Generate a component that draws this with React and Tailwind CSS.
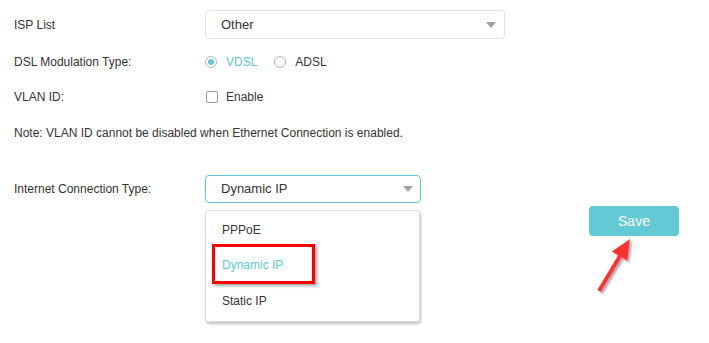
import React from 'react';

const Caret = () => (
  <svg width="10" height="6" viewBox="0 0 10 6" className="shrink-0">
    <path d="M0 0h10L5 6z" fill="#a0a0a0" />
  </svg>
);

const Radio = ({ checked, label }) => (
  <label className="flex items-center gap-[9px]">
    <span className="w-[12px] h-[12px] rounded-full border border-[#b5b5b5] flex items-center justify-center">
      {checked && <span className="w-[6px] h-[6px] rounded-full bg-[#5ec8d5]" />}
    </span>
    <span className={checked ? 'text-[#5ec8d5]' : 'text-[#333]'}>{label}</span>
  </label>
);

const App = () => {
  const options = ['PPPoE', 'Dynamic IP', 'Static IP'];

  return (
    <div
      className="relative w-[709px] h-[343px] bg-white text-[12px] text-[#333] overflow-hidden"
      style={{ fontFamily: '"Liberation Sans", Arial, sans-serif' }}
    >
      <div className="flex flex-col pl-[14px] pt-[10px]">
        <div className="flex items-center h-[29px]">
          <div className="w-[191px]">ISP List</div>
          <div className="w-[300px] h-[29px] border border-[#e3e3e3] rounded-[4px] flex items-center justify-between pl-[15px] pr-[8px] text-[13px]">
            <span>Other</span>
            <Caret />
          </div>
        </div>

        <div className="flex items-center h-[24px] mt-[11px]">
          <div className="w-[191px]">DSL Modulation Type:</div>
          <div className="flex items-center gap-[17px]">
            <Radio checked label="VDSL" />
            <Radio label="ADSL" />
          </div>
        </div>

        <div className="flex items-center h-[24px] mt-[11px]">
          <div className="w-[192px]">VLAN ID:</div>
          <label className="flex items-center gap-[8px]">
            <span className="w-[12px] h-[12px] border border-[#9a9a9a] rounded-[2px]" />
            <span>Enable</span>
          </label>
        </div>

        <div className="flex items-center h-[20px] mt-[14px]">
          Note: VLAN ID cannot be disabled when Ethernet Connection is enabled.
        </div>

        <div className="flex items-center h-[28px] mt-[32px]">
          <div className="w-[191px]">Internet Connection Type:</div>
          <div className="relative">
            <div className="w-[216px] h-[28px] border border-[#5ec8d5] rounded-[4px] flex items-center justify-between pl-[15px] pr-[7px] text-[13px]">
              <span>Dynamic IP</span>
              <Caret />
            </div>
            <div className="absolute left-0 top-[35px] w-[215px] bg-white border border-[#dcdcdc] rounded-[3px] shadow-[1px_2px_3px_rgba(0,0,0,0.25)] pt-[1px] pb-[2px] z-10">
              {options.map((o) => (
                <div
                  key={o}
                  className={`h-[35.5px] flex items-center pl-[16px] ${o === 'Dynamic IP' ? 'text-[#5ec8d5]' : 'text-[#333]'}`}
                >
                  {o}
                </div>
              ))}
              <div className="absolute left-[6px] top-[33px] w-[103px] h-[40px] border-[3px] border-[#ff0000] shadow-[2px_2px_3px_rgba(0,0,0,0.35)]" />
            </div>
          </div>
        </div>

        <div className="flex justify-end pr-[30px] mt-[3px]">
          <button className="w-[90px] h-[30px] rounded-[4px] bg-[#62c9d5] text-white text-[14px]">
            Save
          </button>
        </div>
      </div>

      <svg className="absolute left-0 top-0 pointer-events-none" width="709" height="343">
        <defs>
          <filter id="sh" x="-50%" y="-50%" width="200%" height="200%">
            <feDropShadow dx="2" dy="2" stdDeviation="1.2" floodColor="#000" floodOpacity="0.35" />
          </filter>
        </defs>
        <g filter="url(#sh)">
          <line x1="599" y1="291" x2="620" y2="256" stroke="#ff3333" strokeWidth="4" />
          <path d="M630 239 L627.3 260.8 L611.9 251.4 Z" fill="#ff3333" />
        </g>
      </svg>
    </div>
  );
};

export default App;
